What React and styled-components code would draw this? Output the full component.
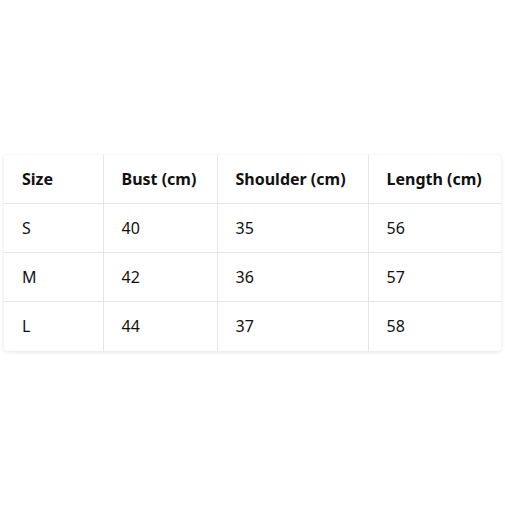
import styled, { createGlobalStyle } from "styled-components";

const GlobalStyle = createGlobalStyle`
  body {
    margin: 0;
    font-family: "Noto Sans", "Open Sans", sans-serif;
    background: #fff;
  }
`;

const Page = styled.div`
  min-height: 100vh;
  display: flex;
  align-items: center;
  padding: 0 4px;
  box-sizing: border-box;
`;

const Card = styled.div`
  width: 100%;
  border-radius: 4px;
  overflow: hidden;
  background: #fff;
  box-shadow: 0 1px 4px rgba(0, 0, 0, 0.12);
`;

const Table = styled.table`
  width: 100%;
  border-collapse: collapse;
  table-layout: fixed;
`;

const Cell = styled.td`
  height: 49px;
  padding: 0 18px;
  box-sizing: border-box;
  font-size: 16px;
  color: #111;
  text-align: left;
  font-weight: ${({ $head }) => ($head ? 700 : 400)};
  border-right: 1px solid #e6e6e6;
  border-bottom: 1px solid #e6e6e6;

  &:last-child {
    border-right: none;
  }
`;

const Row = styled.tr`
  &:last-child td {
    border-bottom: none;
  }
`;

const widths = [99, 114, 151, 133];
const headers = ["Size", "Bust (cm)", "Shoulder (cm)", "Length (cm)"];
const rows = [
  ["S", "40", "35", "56"],
  ["M", "42", "36", "57"],
  ["L", "44", "37", "58"],
];

export default function App() {
  return (
    <>
      <GlobalStyle />
      <Page>
        <Card>
          <Table>
            <colgroup>
              {widths.map((w, i) => (
                <col key={i} style={{ width: w }} />
              ))}
            </colgroup>
            <thead>
              <Row>
                {headers.map((h) => (
                  <Cell as="th" $head key={h}>
                    {h}
                  </Cell>
                ))}
              </Row>
            </thead>
            <tbody>
              {rows.map((r) => (
                <Row key={r[0]}>
                  {r.map((c, i) => (
                    <Cell key={i}>{c}</Cell>
                  ))}
                </Row>
              ))}
            </tbody>
          </Table>
        </Card>
      </Page>
    </>
  );
}
